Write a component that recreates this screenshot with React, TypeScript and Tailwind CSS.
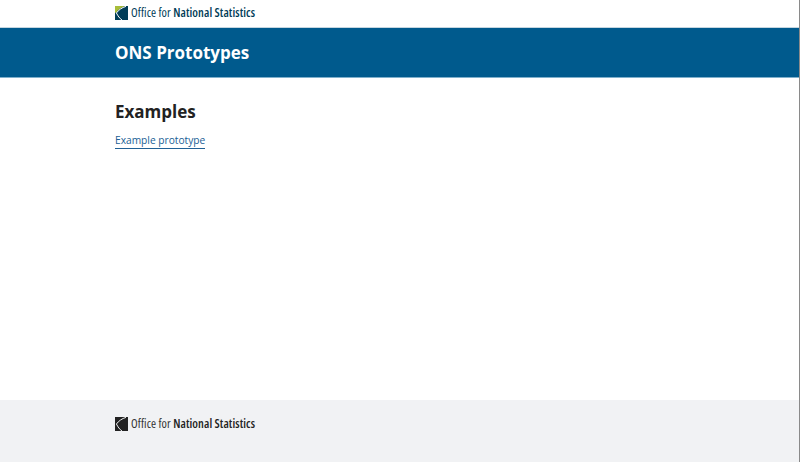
const Logo = ({ mono }: { mono?: boolean }) => (
  <div className="flex items-center">
    <svg width="13" height="14" viewBox="0 0 13 14" className="mr-[3px]">
      <rect width="13" height="14" fill={mono ? "#222222" : "#003c57"} />
      <path d="M0 0H10C6 1.5 3 4 0.8 7L0 6.5Z" fill={mono ? "#222222" : "#a8bd3a"} />
      <path
        d="M11 0.4C7 1.5 3.6 4 1.4 7C3 10 4.6 12.4 7 14"
        fill="none"
        stroke={mono ? "#f0f1f3" : "#ffffff"}
        strokeWidth="1"
      />
    </svg>
    <span className="text-[12.2px] leading-none tracking-[0.1px] [font-stretch:75%] whitespace-nowrap">
      <span className={mono ? "text-[#333333]" : "text-[#003c57]"}>Office for </span>
      <span className={mono ? "font-semibold text-[#222222]" : "font-semibold text-[#003c57]"}>National Statistics</span>
    </span>
  </div>
);

export default function App() {
  return (
    <div className="h-[462px] w-[800px] flex flex-col bg-white border-r border-[#8a8a8a] overflow-hidden font-['Open_Sans',sans-serif] text-[#222222]">
      <header className="h-[28px] pl-[115px] pt-[6px] border-b border-[#c5d6e0]">
        <Logo />
      </header>
      <div className="h-[50px] bg-[#005a8d] border-b border-[#7fb0cc] pl-[115px] flex items-center">
        <h1 className="text-[17px] font-bold text-white">ONS Prototypes</h1>
      </div>
      <main className="flex-1 pl-[115px] pt-[21px]">
        <h2 className="text-[17px] leading-[26px] font-bold mb-[1px]">Examples</h2>
        <a href="#" className="inline-block text-[10.2px] leading-[15px] text-[#206095] border-b border-[#206095]">
          Example prototype
        </a>
      </main>
      <footer className="h-[62px] bg-[#f1f2f4] pl-[115px] pt-[17px]">
        <Logo mono />
      </footer>
    </div>
  );
}
